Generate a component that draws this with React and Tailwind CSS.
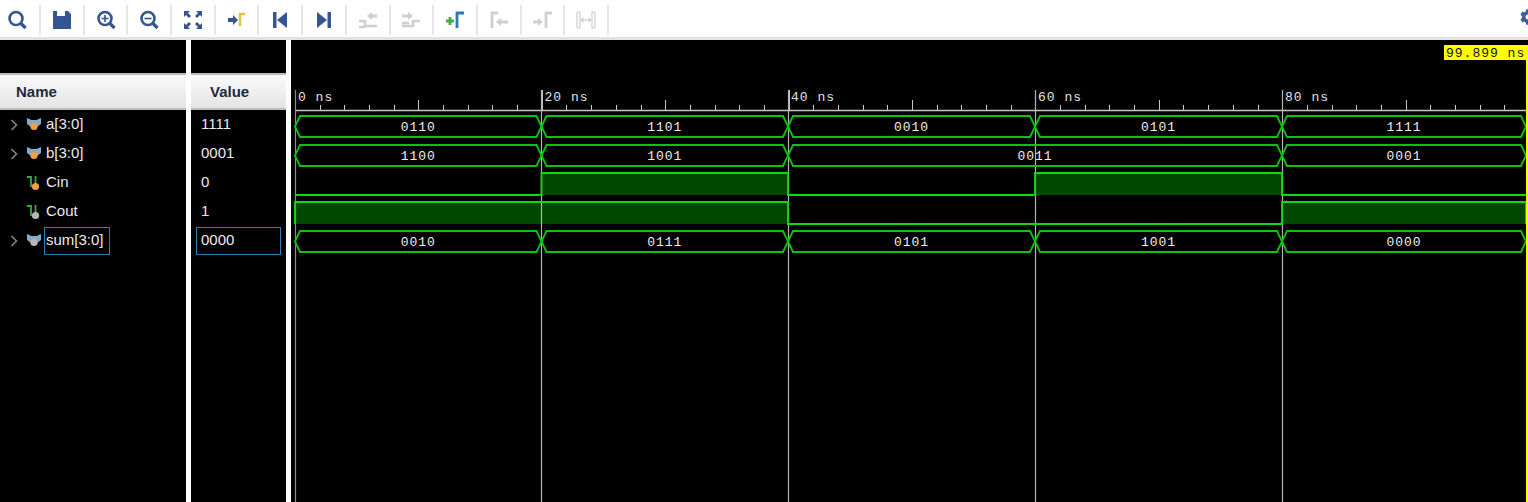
import { FaCog } from 'react-icons/fa';

const NAVY = '#34558f';
const GREY = '#cfcfcf';

const SIGNALS = [
  { name: 'a[3:0]', value: '1111', kind: 'bus', dot: '#f0a040', open: true },
  { name: 'b[3:0]', value: '0001', kind: 'bus', dot: '#f0a040', open: true },
  { name: 'Cin', value: '0', kind: 'bit', dot: '#f0a040' },
  { name: 'Cout', value: '1', kind: 'bit', dot: '#b8b8b8' },
  { name: 'sum[3:0]', value: '0000', kind: 'bus', dot: '#b8b8b8', open: true, selected: true },
];

const EDGES = [295, 541.5, 788, 1035, 1282, 1526];

// bus rows: [from, to, label]
const BUSES = [
  { top: 116, segs: [[295, 541.5, '0110'], [541.5, 788, '1101'], [788, 1035, '0010'], [1035, 1282, '0101'], [1282, 1526, '1111']] },
  { top: 145, segs: [[295, 541.5, '1100'], [541.5, 788, '1001'], [788, 1282, '0011'], [1282, 1526, '0001']] },
  { top: 231, segs: [[295, 541.5, '0010'], [541.5, 788, '0111'], [788, 1035, '0101'], [1035, 1282, '1001'], [1282, 1526, '0000']] },
];

// single bit rows: high spans
const BITS = [
  { high: 173, low: 195, spans: [[541.5, 788], [1035, 1282]] },
  { high: 202, low: 224, spans: [[295, 788], [1282, 1526]] },
];

function Icon({ children }) {
  return (
    <svg width="24" height="24" viewBox="0 0 24 24" fill="none" strokeWidth="2.6">
      {children}
    </svg>
  );
}

const Marker = ({ x, color }) => <path d={`M${x} 18V6h5`} stroke={color} fill="none" strokeWidth="2.6" />;
const Arrow = ({ d, color }) => <path d={d} fill={color} />;

const TOOLS = [
  <Icon><circle cx="11" cy="10.5" r="6.5" stroke={NAVY} /><path d="M16 15.5l4.5 4.5" stroke={NAVY} strokeWidth="3.2" /></Icon>,
  <Icon><path d="M3 3h4v5h8V3h3l3 3v15H3z" fill={NAVY} /></Icon>,
  <Icon><circle cx="11" cy="10.5" r="6.5" stroke={NAVY} /><path d="M16 15.5l4.5 4.5" stroke={NAVY} strokeWidth="3.2" /><path d="M7.5 10.5h7M11 7v7" stroke={NAVY} strokeWidth="1.6" /></Icon>,
  <Icon><circle cx="11" cy="10.5" r="6.5" stroke={NAVY} /><path d="M16 15.5l4.5 4.5" stroke={NAVY} strokeWidth="3.2" /><path d="M7.5 10.5h7" stroke={NAVY} strokeWidth="1.6" /></Icon>,
  <Icon><path d="M3 3l6 0-2 2 3 3-2 2-3-3-2 2zM21 3v6l-2-2-3 3-2-2 3-3-2-2zM3 21v-6l2 2 3-3 2 2-3 3 2 2zM21 21h-6l2-2-3-3 2-2 3 3 2-2z" fill={NAVY} /></Icon>,
  <Icon><Marker x={15} color="#e5c04c" /><Arrow d="M3 10h5V7l5 5-5 5v-3H3z" color={NAVY} /></Icon>,
  <Icon><path d="M5 4h3.5v16H5zM19 4v16L9 12z" fill={NAVY} /></Icon>,
  <Icon><path d="M19 4h-3.5v16H19zM5 4v16l10-8z" fill={NAVY} /></Icon>,
  <Icon><path d="M3 13h6v5h12M3 19h6" stroke={GREY} /><Arrow d="M11 8l5-4v2.5h5v3h-5V12z" color={GREY} /></Icon>,
  <Icon><path d="M3 18h11v-5h7M3 15h7" stroke={GREY} /><Arrow d="M3 6.5h6V4l5 4-5 4V9.5H3z" color={GREY} /></Icon>,
  <Icon><path d="M14 20V5h7" stroke="#2a7ab8" strokeWidth="2.8" /><path d="M3 13h8M7 9v8" stroke="#3fae49" strokeWidth="2.8" /></Icon>,
  <Icon><path d="M5 20V5h6" stroke={GREY} strokeWidth="2.8" /><Arrow d="M9 14l5-4v2.5h7v3h-7V18z" color={GREY} /></Icon>,
  <Icon><path d="M16 20V5h6" stroke={GREY} strokeWidth="2.8" /><Arrow d="M3 12.5h5V10l5 4-5 4v-2.5H3z" color={GREY} /></Icon>,
  <Icon><path d="M3 4h3v16H3zM18 4h3v16h-3z" stroke={GREY} strokeWidth="1.2" /><path d="M7 12h10" stroke={GREY} strokeWidth="1.2" /><Arrow d="M6.5 12l3-3v6zM17.5 12l-3-3v6z" color={GREY} /></Icon>,
];

function Toolbar() {
  return (
    <div className="flex h-[37px] shrink-0 items-start bg-white">
      {TOOLS.map((tool, i) => (
        <div key={i} className={`mt-[5px] flex h-[30px] items-center justify-center border-r-2 border-[#e6e6e6] ${i === 0 ? 'w-[41px] pr-[5px]' : 'w-[43.7px]'}`}>
          {tool}
        </div>
      ))}
      <div className="-mr-[8px] ml-auto mt-[9px] text-[#3d5f9c]">
        <FaCog size={16} />
      </div>
    </div>
  );
}

function SignalIcon({ kind, dot }) {
  if (kind === 'bus') {
    return (
      <svg width="16" height="16" viewBox="0 0 16 16" className="shrink-0">
        <path d="M1 1l4.5 2h5L15 1v6l-4 3H5L1 7z" fill="#86aac6" />
        <circle cx="8" cy="9.5" r="3.6" fill={dot} />
      </svg>
    );
  }
  return (
    <svg width="16" height="16" viewBox="0 0 16 16" className="shrink-0">
      <path d="M1 2h4v10M9.5 1v8" stroke="#3fa54c" strokeWidth="1.8" fill="none" />
      <circle cx="9.5" cy="11.5" r="3.6" fill={dot} />
    </svg>
  );
}

function Chevron() {
  return (
    <svg width="8" height="12" viewBox="0 0 8 12" fill="none" stroke="#8a8a8a" strokeWidth="1.5">
      <path d="M1.5 1l5 5-5 5" />
    </svg>
  );
}

function HeaderCell({ children, className }) {
  return (
    <div className={`flex h-[37px] items-center border-y-2 border-y-[#bdbdbd] bg-gradient-to-b from-[#fafafa] to-[#e4e4e4] pt-px text-[15px] font-bold text-[#1d2a3a] ${className}`}>
      {children}
    </div>
  );
}

function NameColumn() {
  return (
    <div className="w-[186px] shrink-0 bg-black">
      <div className="h-[33px]" />
      <HeaderCell className="pl-4">Name</HeaderCell>
      {SIGNALS.map((s) => (
        <div key={s.name} className="flex h-[29px] items-center text-[15px] text-[#e8ecf0]">
          <div className="flex w-[26px] justify-center pl-[2px]">{s.open && <Chevron />}</div>
          <SignalIcon kind={s.kind} dot={s.dot} />
          <span className={`flex h-[28px] items-center ${s.selected ? 'ml-[2px] w-[66px] border border-[#2f7fb5] pl-px' : 'ml-[4px]'}`}>{s.name}</span>
        </div>
      ))}
    </div>
  );
}

function ValueColumn() {
  return (
    <div className="w-[95px] shrink-0 bg-black">
      <div className="h-[33px]" />
      <HeaderCell className="pl-[19px]">Value</HeaderCell>
      {SIGNALS.map((s) => (
        <div key={s.name} className="flex h-[29px] items-center pl-[5px] pr-[5px] text-[15px] text-[#e8ecf0]">
          <span className={`flex h-[28px] w-full items-center ${s.selected ? 'border border-[#2f7fb5] pl-[4px]' : 'pl-[5px]'}`}>{s.value}</span>
        </div>
      ))}
    </div>
  );
}

function busPath(top, x0, x1) {
  const bot = top + 21;
  const mid = top + 10.5;
  return `M${x0} ${mid}L${x0 + 5} ${top}H${x1 - 5}L${x1} ${mid}L${x1 - 5} ${bot}H${x0 + 5}Z`;
}

function Waves() {
  const ticks = [];
  for (let x = 295; x < 1526; x += 24.68) ticks.push(x);
  const waveText = { fontFamily: '"Liberation Mono", monospace', fontSize: 13, letterSpacing: 1 };

  return (
    <svg width="1237" height="462" viewBox="291 40 1237 462" className="block" style={waveText}>
      {/* ruler */}
      <path d="M295 110.5H1528" stroke="#c8c8c8" strokeWidth="1.5" />
      {ticks.map((x, i) => (
        <path key={i} d={`M${Math.round(x) + 0.5} 110V${i % 10 === 0 ? 90 : i % 5 === 0 ? 100 : 105}`} stroke="#c8c8c8" />
      ))}
      {['0 ns', '20 ns', '40 ns', '60 ns', '80 ns'].map((t, i) => (
        <text key={t} x={EDGES[i] + 3} y="101" fill="#e4e4e4">{t}</text>
      ))}

      {/* bit row fills */}
      {BITS.map((b) =>
        b.spans.map(([x0, x1]) => (
          <rect key={`${b.high}-${x0}`} x={x0} y={b.high} width={x1 - x0} height={b.low - b.high} fill="#004800" />
        ))
      )}

      {/* time grid */}
      {EDGES.slice(0, 5).map((x) => (
        <path key={x} d={`M${Math.floor(x) + 0.5} 90V502`} stroke={x === 295 ? '#8a8a8a' : '#b4b4b4'} strokeWidth="1.2" />
      ))}

      {/* bit row lines */}
      {BITS.map((b) => (
        <path
          key={b.high}
          d={b.spans.reduce((d, [x0, x1]) => `${d}H${x0}V${b.high}H${x1}V${b.low}`, `M295 ${b.low}`) + 'H1526'}
          stroke="#12d812"
          strokeWidth="1.8"
          fill="none"
        />
      ))}

      {/* bus rows */}
      {BUSES.map((bus) => (
        <g key={bus.top}>
          {bus.segs.map(([x0, x1, label]) => (
            <g key={x0}>
              <path d={busPath(bus.top, x0, x1)} stroke="#0cc40c" strokeWidth="1.8" fill="none" />
              <text x={(x0 + x1) / 2} y={bus.top + 15} textAnchor="middle" fill="#f0f0f0">{label}</text>
            </g>
          ))}
        </g>
      ))}

      {/* cursor */}
      <path d="M1527 60V502" stroke="#ffff00" strokeWidth="2" />
      <rect x="1444" y="45" width="84" height="15" fill="#ffff00" />
      <text x="1446" y="57" fill="#111">99.899 ns</text>
    </svg>
  );
}

export default function App() {
  return (
    <div className="flex h-[502px] w-[1528px] flex-col overflow-hidden bg-white font-['Liberation_Sans',sans-serif]">
      <Toolbar />
      <div className="h-[3px] shrink-0 bg-[#e2e2e2]" />
      <div className="flex min-h-0 flex-1 gap-[5px] bg-white">
        <NameColumn />
        <ValueColumn />
        <div className="min-w-0 flex-1 bg-black">
          <Waves />
        </div>
      </div>
    </div>
  );
}
